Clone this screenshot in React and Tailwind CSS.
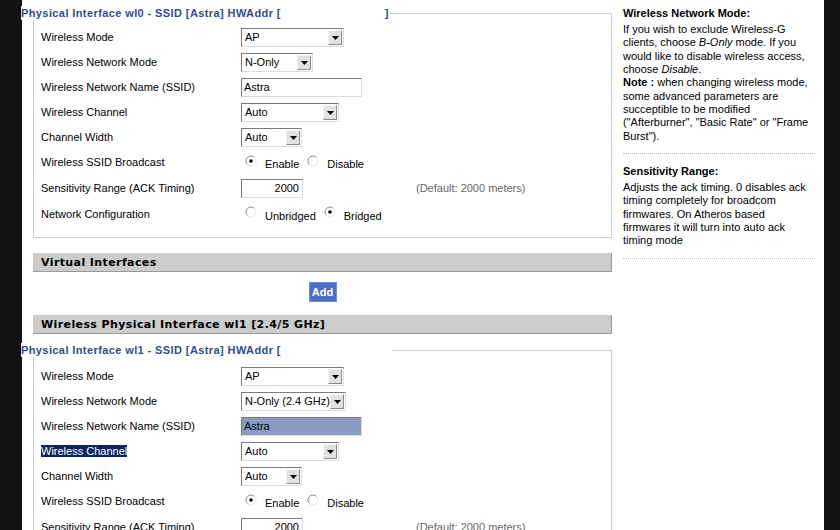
import React from "react";

function Tri() {
  return (
    <svg width="7" height="4" viewBox="0 0 7 4">
      <path d="M0 0 H7 L3.5 4 Z" fill="#000" />
    </svg>
  );
}

function Select({ className, value }) {
  return (
    <div
      className={
        "flex h-[19px] items-center border border-t-[#7a7a7a] border-l-[#7a7a7a] border-r-[#dcdcdc] border-b-[#dcdcdc] bg-white " +
        className
      }
    >
      <span className="flex-1 overflow-hidden whitespace-nowrap pl-[3px] text-[11px] leading-[15px] text-black">{value}</span>
      <span className="mr-[1px] flex h-[15px] w-[14px] shrink-0 items-center justify-center border border-t-[#f4f4f4] border-l-[#f4f4f4] border-r-[#8a8a8a] border-b-[#8a8a8a] bg-[#e2e2e2]">
        <Tri />
      </span>
    </div>
  );
}

function Input({ className, value, right, selected }) {
  return (
    <div
      className={
        "flex h-[19px] items-center border border-t-[#7a7a7a] border-l-[#7a7a7a] border-r-[#dcdcdc] border-b-[#dcdcdc] " +
        (selected ? "bg-[#8a9ac3] " : "bg-white ") +
        (right ? "justify-end pr-[3px] " : "pl-[2px] ") +
        className
      }
    >
      <span className="text-[11px] leading-[15px] text-black">{value}</span>
    </div>
  );
}

function Radio({ checked }) {
  return (
    <svg width="12" height="12" viewBox="0 0 12 12" className="-translate-y-[2px]">
      <circle cx="6" cy="6" r="5" fill="#fff" />
      <path d="M2.46 9.54 A5 5 0 0 1 9.54 2.46" fill="none" stroke="#8a8a8a" strokeWidth="1" />
      <path d="M9.54 2.46 A5 5 0 0 1 2.46 9.54" fill="none" stroke="#e6e6e6" strokeWidth="1" />
      {checked && <circle cx="6" cy="6" r="1.8" fill="#000" />}
    </svg>
  );
}

function RadioPair({ a, b, first }) {
  return (
    <div className="flex items-center pl-[4px]">
      <Radio checked={first} />
      <span className="ml-[8px] translate-y-[2px] text-[11px]">{a}</span>
      <span className="ml-[8px] flex items-center">
        <Radio checked={!first} />
        <span className="ml-[8px] translate-y-[2px] text-[11px]">{b}</span>
      </span>
    </div>
  );
}

function Row({ label, hl, tall, children }) {
  return (
    <div className={"flex items-center pl-[7px] " + (tall ? "h-[26px]" : "h-[25px]")}>
      <div className="w-[200px] text-[11px] leading-[13px] text-black">
        {hl ? <span className="bg-[#0b2464] text-white">{label}</span> : label}
      </div>
      <div className="flex items-center">{children}</div>
    </div>
  );
}

function Legend({ text, tail, spacer }) {
  return (
    <legend className="-ml-[13px] bg-white p-0 text-[11px] font-bold leading-[14px] tracking-[0.4px] text-[#2f4d8c]">
      {text}
      <span className={"inline-block " + spacer} />
      {tail}
    </legend>
  );
}

function Header({ children }) {
  return (
    <div
      className="flex h-[19px] items-center border-b border-r border-b-[#999] border-r-[#999] bg-[#cccccc] pl-[8px] pt-[2px] text-[11px] font-bold tracking-[0.4px] text-black"
      style={{ fontFamily: '"DejaVu Sans", Verdana, sans-serif' }}
    >
      {children}
    </div>
  );
}

function Rows({ second }) {
  return (
    <>
      <Row label="Wireless Mode">
        <Select className="w-[103px]" value="AP" />
      </Row>
      <Row label="Wireless Network Mode">
        {second ? (
          <Select className="w-[105px]" value="N-Only (2.4 GHz)" />
        ) : (
          <Select className="w-[72px]" value="N-Only" />
        )}
      </Row>
      <Row label="Wireless Network Name (SSID)">
        <Input className="w-[121px]" value="Astra" selected={second} />
      </Row>
      <Row label="Wireless Channel" hl={second}>
        <Select className="w-[98px]" value="Auto" />
      </Row>
      <Row label="Channel Width">
        <Select className="w-[61px]" value="Auto" />
      </Row>
      <Row label="Wireless SSID Broadcast">
        <RadioPair a="Enable" b="Disable" first />
      </Row>
      <Row label="Sensitivity Range (ACK Timing)" tall>
        <Input className="w-[62px]" value="2000" right />
        <span className="ml-[113px] text-[11px] text-[#666]">(Default: 2000 meters)</span>
      </Row>
      <Row label="Network Configuration" tall>
        <RadioPair a="Unbridged" b="Bridged" first={false} />
      </Row>
    </>
  );
}

export default function App() {
  return (
    <div
      className="flex h-[530px] w-[840px] overflow-hidden bg-[#121212]"
      style={{ fontFamily: '"Liberation Sans", Arial, sans-serif' }}
    >
      <div className="w-[22px] shrink-0" />
      <div className="flex w-[802px] shrink-0 bg-white pl-[11px] pt-[6px]">
        <div className="w-[579px] shrink-0">
          <fieldset className="border border-[#cccccc] pb-[10px]">
            <Legend text="Physical Interface wl0 - SSID [Astra] HWAddr [" spacer="w-[104px]" tail="]" />
            <div className="pt-[5px]">
              <Rows />
            </div>
          </fieldset>

          <div className="mt-[15px]">
            <Header>Virtual Interfaces</Header>
          </div>
          <div className="mt-[10px] flex justify-center">
            <div className="flex h-[20px] w-[28px] items-center justify-center border border-[#6d8bd6] bg-[#4a6ec9] text-[11px] font-bold text-white">
              Add
            </div>
          </div>
          <div className="mt-[13px]">
            <Header>Wireless Physical Interface wl1 [2.4/5 GHz]</Header>
          </div>

          <fieldset className="mt-[9px] border border-[#cccccc] pb-[10px]">
            <Legend text="Physical Interface wl1 - SSID [Astra] HWAddr [" spacer="w-[111px]" tail="" />
            <div className="pt-[7px]">
              <Rows second />
            </div>
          </fieldset>
        </div>

        <div className="ml-[11px] w-[192px] shrink-0 pt-[1px] text-[11px] leading-[13.33px] text-black">
          <div className="border-b border-dotted border-[#b5b5b5] pb-[10px]">
            <div className="mb-[2.67px] font-bold">Wireless Network Mode:</div>
            <div>
              If you wish to exclude Wireless-G
              <br />
              clients, choose <i>B-Only</i> mode. If you
              <br />
              would like to disable wireless access,
              <br />
              choose <i>Disable</i>.
              <br />
              <b>Note :</b> when changing wireless mode,
              <br />
              some advanced parameters are
              <br />
              succeptible to be modified
              <br />
              ("Afterburner", "Basic Rate" or "Frame
              <br />
              Burst").
            </div>
          </div>
          <div className="border-b border-dotted border-[#b5b5b5] pb-[10px] pt-[11px]">
            <div className="mb-[2.67px] font-bold">Sensitivity Range:</div>
            <div>
              Adjusts the ack timing. 0 disables ack
              <br />
              timing completely for broadcom
              <br />
              firmwares. On Atheros based
              <br />
              firmwares it will turn into auto ack
              <br />
              timing mode
            </div>
          </div>
        </div>
      </div>
    </div>
  );
}
